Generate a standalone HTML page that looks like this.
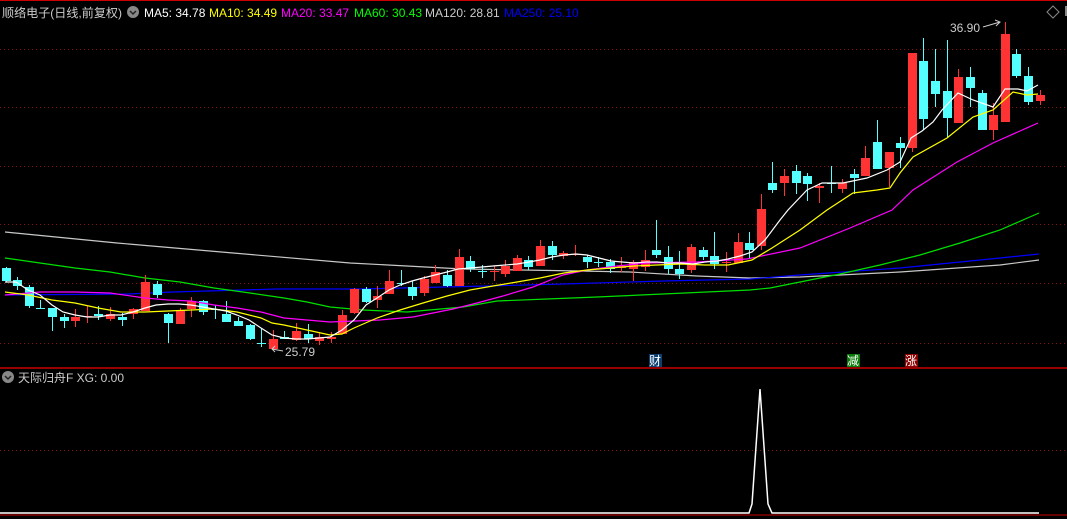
<!DOCTYPE html>
<html><head><meta charset="utf-8"><style>
html,body{margin:0;padding:0;background:#000;width:1067px;height:519px;overflow:hidden}
svg{display:block}
text{font-family:"Liberation Sans","Noto Sans CJK SC",sans-serif}
</style></head><body>
<svg id="s" width="1067" height="519" viewBox="0 0 1067 519" xmlns="http://www.w3.org/2000/svg">
<rect width="1067" height="519" fill="#000"/>
<line x1="0" y1="0.5" x2="1067" y2="0.5" stroke="#c00" stroke-width="1"/>
<g stroke="#8a1010" stroke-dasharray="1,3" stroke-width="1">
<line x1="0" y1="49.5" x2="1067" y2="49.5"/>
<line x1="0" y1="107.5" x2="1067" y2="107.5"/>
<line x1="0" y1="166.5" x2="1067" y2="166.5"/>
<line x1="0" y1="224.5" x2="1067" y2="224.5"/>
<line x1="0" y1="283.5" x2="1067" y2="283.5"/>
<line x1="0" y1="343.5" x2="1067" y2="343.5"/>
<line x1="0" y1="450.5" x2="1067" y2="450.5"/>
</g>
<line x1="0" y1="368" x2="1067" y2="368" stroke="#c00" stroke-width="1.5"/>
<line x1="0" y1="515" x2="1067" y2="515" stroke="#c00" stroke-width="1"/>
<g id="ma" fill="none" stroke-width="1.2"></g>
<g id="c"></g>
<g id="ma2" fill="none" stroke-width="1.2"></g>
<polyline points="0,513 749,513 752,504 760,389 768,504 772,513 1039,513" fill="none" stroke="#fff" stroke-width="1.5"/>
<text x="2" y="17" font-size="12" fill="#ccc" textLength="120" lengthAdjust="spacingAndGlyphs">顺络电子(日线,前复权)</text>
<circle cx="133" cy="12" r="6" fill="#888"/><path d="M130,11 L133,14 L136,11" stroke="#222" stroke-width="1.5" fill="none"/>
<text x="144" y="17" font-size="12" fill="#fff">MA5: 34.78</text>
<text x="209" y="17" font-size="12" fill="#ff0">MA10: 34.49</text>
<text x="281" y="17" font-size="12" fill="#f0f">MA20: 33.47</text>
<text x="354" y="17" font-size="12" fill="#0f0">MA60: 30.43</text>
<text x="425" y="17" font-size="12" fill="#ccc">MA120: 28.81</text>
<text x="504" y="17" font-size="12" fill="#00f">MA250: 25.10</text>
<path d="M1053,6 L1059,12 L1053,18 L1047,12 Z" fill="none" stroke="#888"/>
<rect x="1065" y="6" width="2" height="10" fill="#888"/>
<text x="950" y="32" font-size="12" fill="#ccc">36.90</text>
<path d="M983,27 L1000,22 M995,20 L1000,22 L996,26" stroke="#ccc" fill="none"/>
<text x="285" y="356" font-size="12" fill="#ccc">25.79</text>
<path d="M283,351 L272,349 M275,346 L272,349 L275,352" stroke="#ccc" fill="none"/>
<rect x="649" y="354" width="13" height="13" fill="#0b3f70"/><text x="649" y="365" font-size="12" fill="#fff">财</text>
<rect x="847" y="354" width="13" height="13" fill="#0a7a0a"/><text x="847" y="365" font-size="12" fill="#fff">减</text>
<rect x="905" y="354" width="13" height="13" fill="#8b0000"/><text x="905" y="365" font-size="12" fill="#fff">涨</text>
<circle cx="8" cy="377" r="6" fill="#888"/><path d="M5,376 L8,379 L11,376" stroke="#222" stroke-width="1.5" fill="none"/>
<text x="18" y="382" font-size="12" fill="#ccc">天际归舟F  XG: 0.00</text>
</svg>
<script>
var D=[
['c',268,281,267,282],['c',280,286,277,290],['c',287,306,285,308],['c',308,309,300,309],['c',308,317,308,331],
['c',317,321,314,328],['r',317,321,309,327],['r',316,317,306,323],['c',314,316,306,320],['r',314,319,307,321],
['c',317,320,313,326],['r',309,314,308,319],['r',282,311,275,311],['c',284,295,281,298],['c',314,323,313,343],
['r',310,324,308,324],['r',301,309,297,317],['c',301,312,300,315],['c',309,310,305,319],['c',314,322,301,322],
['c',321,326,317,326],['c',325,339,324,340],['c',343,344,328,347],['r',339,349,330,349],['c',337,339,331,339],
['r',331,340,323,341],['c',334,339,324,343],['r',337,341,333,345],['r',337,339,332,343],['r',315,334,310,334],
['r',289,313,288,314],['c',289,302,287,303],['r',296,300,286,308],['r',281,294,270,294],['c',283,284,270,286],
['c',287,296,281,300],['r',279,293,276,296],['r',272,283,265,283],['c',275,286,270,287],['r',257,286,249,286],
['c',261,269,256,272],['c',271,272,265,278],['r',271,272,266,281],['r',266,274,260,277],['r',258,271,255,271],
['c',260,267,256,270],['r',246,266,240,266],['c',246,255,241,260],['r',253,256,251,259],['r',254,255,245,256],
['c',257,262,255,268],['c',262,263,257,267],['c',262,269,259,273],['r',266,268,257,272],['r',262,269,260,281],
['r',260,267,250,271],['c',250,255,220,258],['c',257,269,246,274],['c',269,274,251,279],['r',247,270,244,273],
['c',250,257,247,260],['c',256,264,232,269],['r',262,263,252,272],['r',242,263,233,263],['c',243,250,232,258],
['r',209,246,194,250],['c',183,190,162,193],['r',176,183,169,196],['c',171,183,165,194],['c',176,184,173,201],
['r',186,188,183,203],['c',183,184,166,193],['r',183,189,179,193],['c',174,178,169,194],['r',158,176,146,176],
['c',142,169,120,169],['r',152,168,152,187],['c',143,148,137,168],['r',53,148,53,152],['c',61,119,38,130],
['c',81,94,49,107],['c',91,118,40,138],['r',77,123,69,123],['c',77,88,67,107],['c',93,130,90,130],
['r',115,130,103,140],['r',34,122,22,122],['c',54,76,49,78],['c',76,102,67,105],['r',95,101,90,105]];
var ns='http://www.w3.org/2000/svg',g=document.getElementById('c');
D.forEach(function(d,i){
 var x=Math.round(5.5+i*11.62),col=d[0]=='r'?'#ff3333':'#54ffff';
 var l=document.createElementNS(ns,'line');
 l.setAttribute('x1',x+0.5);l.setAttribute('x2',x+0.5);l.setAttribute('y1',d[3]);l.setAttribute('y2',d[4]);
 l.setAttribute('stroke',col);g.appendChild(l);
 var r=document.createElementNS(ns,'rect');
 r.setAttribute('x',x-4);r.setAttribute('width',9);r.setAttribute('y',d[1]);r.setAttribute('height',Math.max(1,d[2]-d[1]));
 r.setAttribute('fill',col);g.appendChild(r);
});
var L=[
['#c8c8c8','5,232 117,243 233,253 350,263 463,269 580,271 630,272 697,276 750,278 800,277 900,272 1000,265 1039,260',1],
['#0000ff','5,295 127,294 173,292 277,289 360,289 487,286 563,284 663,281 750,279 800,275 900,268 1000,258 1039,254',1],
['#00e000','5,258 40,263 75,268 110,272 145,278 180,282 214,288 250,293 284,298 307,302 330,307 363,310 407,312 463,307 497,301 547,299 597,297 663,294 750,290 770,288 800,282 840,274 880,265 920,255 960,243 1000,230 1039,213',1],
['#ff00ff','5,295 40,292 75,292 110,293 145,298 168,300 191,301 214,305 237,308 261,312 284,318 307,320 330,322 380,320 413,317 453,309 477,303 503,296 533,287 563,275 587,270 617,266 647,263 697,262 747,259 800,248 850,228 892,210 913,190 957,162 993,143 1038,123',2],
['#ffff00','5,292 28,295 52,300 75,303 98,308 121,312 145,312 168,311 191,310 214,309 237,312 261,318 272,323 284,325 307,330 330,335 342,334 354,328 377,318 400,310 423,303 447,296 470,290 493,286 517,282 540,278 564,273 587,270 611,268 634,266 657,265 681,264 705,265 728,265 752,260 772,248 800,230 827,210 853,193 877,190 890,188 900,173 913,157 947,138 973,117 993,110 1013,92 1027,95 1038,94',2],
['#ffffff','5,282 16,282 28,290 40,295 52,305 63,312 75,315 87,317 98,317 110,315 121,315 133,312 145,308 156,305 168,304 179,304 191,305 203,307 214,309 226,311 237,315 249,320 261,328 272,335 284,338 296,339 307,339 319,338 330,337 342,330 354,320 366,305 377,298 389,290 400,285 412,281 423,278 435,275 447,272 458,269 470,268 482,267 493,266 505,265 517,264 529,262 540,260 552,257 564,255 576,254 587,255 599,258 611,261 622,262 634,263 646,262 657,262 669,263 681,263 693,264 705,262 717,261 728,259 740,256 752,252 765,240 780,220 788,210 807,190 822,183 843,183 867,178 887,170 900,162 911,138 922,131 933,122 942,110 958,93 973,100 993,107 1005,89 1018,89 1027,91 1038,85',2]];
L.forEach(function(a){
 var p=document.createElementNS(ns,'polyline');p.setAttribute('points',a[1]);p.setAttribute('stroke',a[0]);
 document.getElementById(a[2]==1?'ma':'ma2').appendChild(p);
});
</script>
</body></html>
